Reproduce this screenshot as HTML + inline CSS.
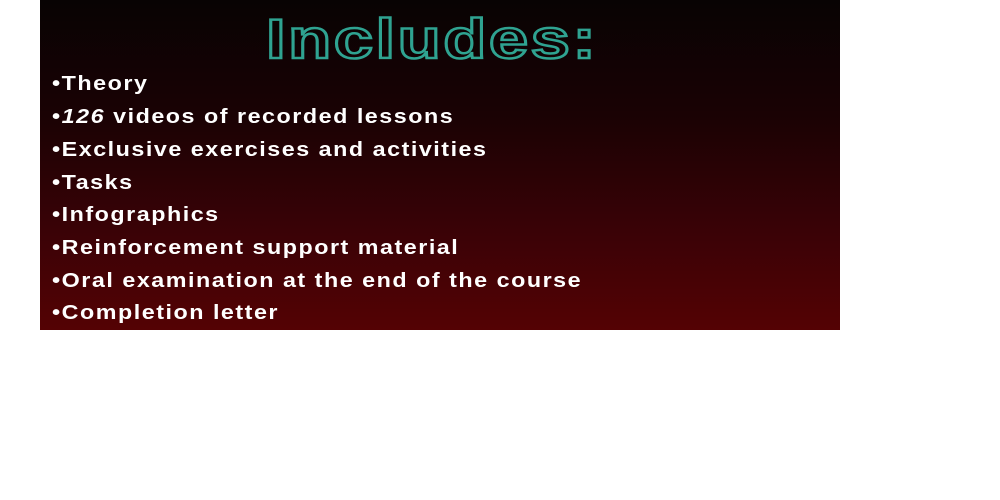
<!DOCTYPE html>
<html><head><style>
body{margin:0;width:1000px;height:500px;background:#fff;position:relative;overflow:hidden;font-family:"Liberation Sans",sans-serif}
#box{position:absolute;left:40px;top:0;width:800px;height:330px;background:linear-gradient(#080303 0%,#1a0204 35%,#3a0206 70%,#540204 100%)}
h1{position:absolute;left:226px;top:6px;margin:0;font-size:56px;font-weight:bold;color:transparent;-webkit-text-stroke:2.5px #2fa391;letter-spacing:2px;transform:scaleX(1.26);transform-origin:left}
.i{position:absolute;left:12px;color:#fff;font-weight:bold;font-size:20px;letter-spacing:1.3px;white-space:nowrap;transform:scaleX(1.165);transform-origin:left}
</style></head><body>
<div id="box">
<h1>Includes:</h1>
<div class="i" style="top:73px">•Theory</div>
<div class="i" style="top:106px">•<i>126</i> videos of recorded lessons</div>
<div class="i" style="top:139px">•Exclusive exercises and activities</div>
<div class="i" style="top:172px">•Tasks</div>
<div class="i" style="top:204px">•Infographics</div>
<div class="i" style="top:237px">•Reinforcement support material</div>
<div class="i" style="top:270px">•Oral examination at the end of the course</div>
<div class="i" style="top:302px">•Completion letter</div>
</div>
</body></html>
